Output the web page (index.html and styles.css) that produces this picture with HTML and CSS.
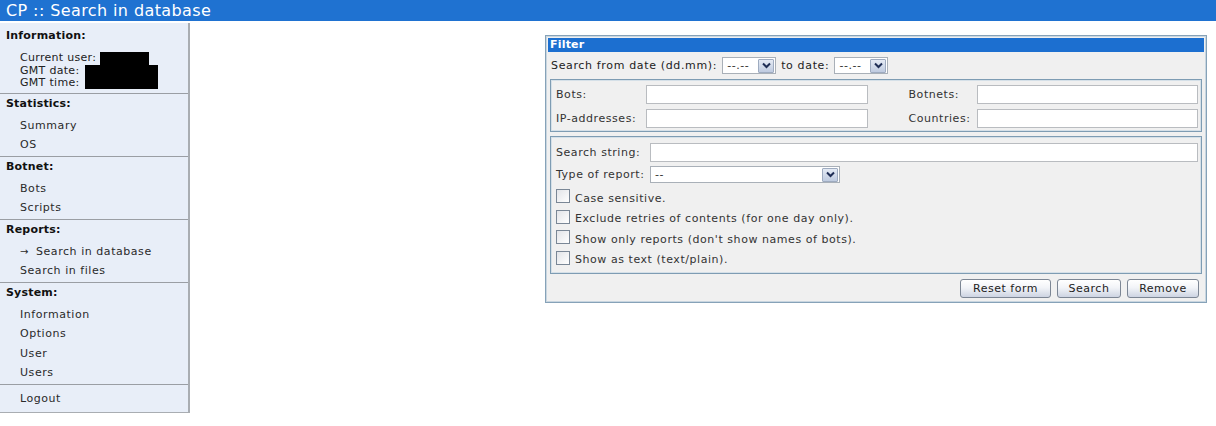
FILE: index.html
```html
<!DOCTYPE html>
<html>
<head>
<meta charset="utf-8">
<title>CP :: Search in database</title>
<link rel="stylesheet" href="styles.css">
</head>
<body>
<div class="topbar">CP :: Search in database</div>
<div class="layout">
  <nav class="sidebar">
    <div class="section first">
      <div class="sec-title">Information:</div>
      <div class="info">
        <div class="info-line">Current user: <span class="redact-user"></span></div>
        <div class="info-line">GMT date: <span class="redact-date"></span></div>
        <div class="info-line">GMT time:</div>
      </div>
    </div>
    <div class="section">
      <div class="sec-title">Statistics:</div>
      <ul class="items">
        <li>Summary</li>
        <li>OS</li>
      </ul>
    </div>
    <div class="section">
      <div class="sec-title">Botnet:</div>
      <ul class="items">
        <li>Bots</li>
        <li>Scripts</li>
      </ul>
    </div>
    <div class="section">
      <div class="sec-title">Reports:</div>
      <ul class="items">
        <li><span class="arrow-mark">→</span>Search in database</li>
        <li>Search in files</li>
      </ul>
    </div>
    <div class="section">
      <div class="sec-title">System:</div>
      <ul class="items">
        <li>Information</li>
        <li>Options</li>
        <li>User</li>
        <li>Users</li>
      </ul>
    </div>
    <div class="section last">
      <ul class="items">
        <li>Logout</li>
      </ul>
    </div>
  </nav>
  <main class="main">
    <form class="panel">
      <div class="panel-title">Filter</div>
      <div class="date-row">
        <span>Search from date (dd.mm):</span>
        <span class="select date-select"><span class="val">--.--</span><span class="arrow"><svg width="9" height="7" viewBox="0 0 9 7"><path d="M1 1.5 L4.5 5 L8 1.5" fill="none" stroke="#1e2d55" stroke-width="2"/></svg></span></span>
        <span>to date:</span>
        <span class="select date-select"><span class="val">--.--</span><span class="arrow"><svg width="9" height="7" viewBox="0 0 9 7"><path d="M1 1.5 L4.5 5 L8 1.5" fill="none" stroke="#1e2d55" stroke-width="2"/></svg></span></span>
      </div>
      <div class="box grid-box">
        <label class="lbl">Bots:</label>
        <input class="field" type="text">
        <span></span>
        <label class="lbl">Botnets:</label>
        <input class="field" type="text">
        <label class="lbl">IP-addresses:</label>
        <input class="field" type="text">
        <span></span>
        <label class="lbl">Countries:</label>
        <input class="field" type="text">
      </div>
      <div class="box opts-box">
        <div class="opt-row">
          <label class="lbl2">Search string:</label>
          <input class="field wide" type="text">
        </div>
        <div class="opt-row">
          <label class="lbl2">Type of report:</label>
          <span class="select report-select"><span class="val">--</span><span class="arrow"><svg width="9" height="7" viewBox="0 0 9 7"><path d="M1 1.5 L4.5 5 L8 1.5" fill="none" stroke="#1e2d55" stroke-width="2"/></svg></span></span>
        </div>
        <label class="check"><input type="checkbox"><span>Case sensitive.</span></label>
        <label class="check"><input type="checkbox"><span>Exclude retries of contents (for one day only).</span></label>
        <label class="check"><input type="checkbox"><span>Show only reports (don't show names of bots).</span></label>
        <label class="check"><input type="checkbox"><span>Show as text (text/plain).</span></label>
      </div>
      <div class="buttons">
        <button type="button" class="btn btn-reset">Reset form</button>
        <button type="button" class="btn btn-search">Search</button>
        <button type="button" class="btn btn-remove">Remove</button>
      </div>
    </form>
  </main>
</div>
</body>
</html>
```

FILE: styles.css
```css
* { box-sizing: border-box; }

html, body {
  margin: 0;
  padding: 0;
  background: #ffffff;
  font-family: "DejaVu Sans", Verdana, sans-serif;
  font-size: 11px;
  letter-spacing: 0.55px;
  color: #222222;
}

.topbar {
  height: 21px;
  background: #1f72d1;
  color: #ffffff;
  font-size: 16px;
  letter-spacing: 0.4px;
  line-height: 21px;
  padding-left: 6px;
  white-space: nowrap;
}

.layout {
  display: flex;
  align-items: flex-start;
}

/* ---------- sidebar ---------- */
.sidebar {
  margin-top: 2px;
  width: 190px;
  flex: none;
  background: #e8eef8;
  border-right: 2px solid #a9adb2;
  border-bottom: 1px solid #a9adb2;
}

.section {
  border-top: 1px solid #9a9ea4;
  padding-bottom: 1px;
}

.section.first {
  border-top: none;
  padding-top: 3px;
  padding-bottom: 0;
}

.section.last {
  padding-top: 4px;
  padding-bottom: 4px;
}

.sec-title {
  height: 20px;
  line-height: 20px;
  padding-left: 6px;
  font-weight: bold;
  letter-spacing: 0.2px;
  color: #111111;
}

.items {
  list-style: none;
  margin: 0;
  padding: 2px 0 0 0;
}

.section.last .items { padding-top: 0; }

.items li {
  height: 19.5px;
  line-height: 19.5px;
  padding-left: 20px;
  color: #2a2a2a;
}

.arrow-mark {
  display: inline-block;
  width: 16px;
  font-size: 10px;
  letter-spacing: 0;
}

.info {
  position: relative;
  padding: 6px 0 3px 20px;
  letter-spacing: 0.3px;
}

.info-line {
  height: 12.5px;
  line-height: 12.5px;
  color: #222;
}

.redact-user {
  display: inline-block;
  width: 49px;
  height: 13px;
  background: #000;
  vertical-align: top;
}

.redact-date {
  position: absolute;
  left: 85px;
  top: 19px;
  width: 73px;
  height: 24px;
  background: #000;
}

/* ---------- main ---------- */
.main {
  padding: 14px 0 0 355px;
}

.panel {
  width: 662px;
  margin: 0;
  border: 1px solid #86a2b8;
  box-shadow: inset 0 0 0 1px #c9d6e0;
  background: #f0f0f0;
  padding: 2px;
}

.panel-title {
  height: 14px;
  line-height: 14px;
  background: #1c6fd0;
  color: #ffffff;
  font-weight: bold;
  letter-spacing: 0.2px;
  padding-left: 2px;
}

.date-row {
  height: 26px;
  display: flex;
  align-items: center;
  gap: 5px;
  padding-left: 3px;
  padding-top: 1px;
  letter-spacing: 0.65px;
}

.select {
  display: inline-flex;
  align-items: center;
  height: 17px;
  background: #ffffff;
  border: 1px solid #a9b0b8;
  padding-right: 1px;
  letter-spacing: 0.55px;
}

.select .val {
  flex: 1;
  padding-left: 4px;
  line-height: 15px;
  color: #333;
}

.select .arrow {
  width: 16px;
  height: 14px;
  display: flex;
  align-items: center;
  justify-content: center;
  background: linear-gradient(#e4eaf4, #bfcbe0);
  border: 1px solid #9eabc0;
  border-radius: 1px;
}

.date-select { width: 54px; }
.report-select { width: 190px; }

.box {
  border: 1px solid #7e9cb3;
  box-shadow: inset 0 0 0 1px #d5e0e8;
  margin: 1px 2px 0 2px;
}

.grid-box {
  display: grid;
  grid-template-columns: 90px 1fr 41px 68px 1fr;
  row-gap: 5px;
  align-items: center;
  padding: 5px 3px 3px 5px;
}

.lbl { color: #333; }

.field {
  height: 19px;
  border: 1px solid #b9bcc0;
  background: #ffffff;
  padding: 0 3px;
  font: inherit;
  margin: 0;
  width: 100%;
}

.opts-box {
  margin-top: 4px;
  padding: 6px 3px 4px 5px;
}

.opt-row {
  display: flex;
  align-items: center;
  margin-bottom: 4px;
}

.opt-row:nth-child(2) { margin-bottom: 4px; }

.lbl2 {
  width: 94px;
  flex: none;
  color: #333;
}

.field.wide { flex: 1; }

.check {
  display: flex;
  align-items: center;
  height: 20.5px;
  color: #333;
}

.check input {
  appearance: none;
  -webkit-appearance: none;
  width: 14px;
  height: 14px;
  margin: 0 5px 0 0;
  border: 1px solid #7a8796;
  background: linear-gradient(135deg, #e2e4e8, #ffffff);
  position: relative;
  top: -1px;
}

.check span { position: relative; top: 1px; }

.buttons {
  display: flex;
  justify-content: flex-end;
  gap: 6px;
  margin-top: 5px;
  padding-right: 5px;
  margin-bottom: 2px;
}

.btn {
  height: 19px;
  padding: 0;
  font: inherit;
  color: #222;
  letter-spacing: 0.5px;
  border: 1px solid #7c8694;
  border-radius: 3px;
  background: linear-gradient(#ffffff 0%, #f2f4f8 45%, #cdd4e2 100%);
}

.btn-reset { width: 91px; }
.btn-search { width: 64px; }
.btn-remove { width: 72px; }
```
